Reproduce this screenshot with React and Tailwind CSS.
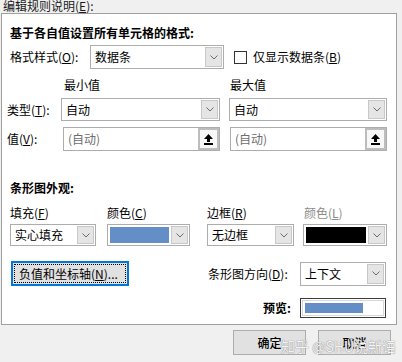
import React from 'react'

const font = { fontFamily: '"Noto Sans CJK SC", "Noto Sans", sans-serif' }

function Chevron() {
  return (
    <svg width="8" height="5" viewBox="0 0 8 5" fill="none">
      <path d="M0.5 0.5 L4 4 L7.5 0.5" stroke="#6b6b6b" strokeWidth="1" />
    </svg>
  )
}

function UpIcon() {
  return (
    <svg width="9" height="11" viewBox="0 0 9 11">
      <path d="M4.5 0 L9 5 L6 5 L6 8 L3 8 L3 5 L0 5 Z" fill="#000" />
      <rect x="0" y="9" width="9" height="2" fill="#000" />
    </svg>
  )
}

function Select({ className = '', children, swatch }) {
  return (
    <div className={`flex items-stretch border border-[#adadad] bg-white ${className}`}>
      {swatch ? (
        <div className="flex-1 p-[2px]">
          <div className={`h-full ${swatch}`} />
        </div>
      ) : (
        <div className="flex-1 flex items-center pl-[4px] text-[12px] text-black">{children}</div>
      )}
      <div className="my-[1px] mr-[1px] w-[17px] flex items-center justify-center bg-[#e5e5e5] border border-[#c8c8c8]">
        <Chevron />
      </div>
    </div>
  )
}

function ValueInput({ className = '' }) {
  return (
    <div className={`flex items-stretch border border-[#adadad] bg-white ${className}`}>
      <div className="flex-1 flex items-center pl-[4px] text-[12px] text-[#6d6d6d]">(自动)</div>
      <div className="w-[21px] flex items-center justify-center border-[2px] border-[#bdbdbd] bg-[#f7f7f7]">
        <UpIcon />
      </div>
    </div>
  )
}

export default function App() {
  return (
    <div className="w-[402px] h-[362px] bg-[#f0f0f0] overflow-hidden relative text-[12px] text-black" style={font}>
      {/* caption */}
      <div className="h-[16px] pl-[3px] -mt-[2px] mb-[-1px] leading-[16px] text-[#1a1a1a]">
        编辑规则说明(<u>E</u>):
      </div>

      {/* panel */}
      <div className="ml-[1px] w-[396px] h-[312px] border border-[#a0a0a0] bg-white flex flex-col">
        <div className="mt-[11px] ml-[8px] h-[16px] leading-[16px] font-bold">基于各自值设置所有单元格的格式:</div>

        <div className="mt-[4px] flex items-center h-[24px]">
          <div className="ml-[8px] w-[80px]">格式样式(<u>O</u>):</div>
          <Select className="w-[134px] h-[24px]">数据条</Select>
          <div className="ml-[10px] w-[13px] h-[13px] border border-[#333] bg-white" />
          <div className="ml-[6px]">仅显示数据条(<u>B</u>)</div>
        </div>

        <div className="mt-[8px] flex h-[16px] leading-[16px]">
          <div className="ml-[62px] w-[166px]">最小值</div>
          <div>最大值</div>
        </div>

        <div className="mt-[5px] flex items-center h-[23px]">
          <div className="ml-[5px] w-[54px]">类型(<u>T</u>):</div>
          <Select className="w-[159px] h-[23px]">自动</Select>
          <Select className="ml-[9px] w-[158px] h-[23px]">自动</Select>
        </div>

        <div className="mt-[6px] flex items-center h-[24px]">
          <div className="ml-[5px] w-[56px]">值(<u>V</u>):</div>
          <ValueInput className="w-[157px] h-[24px]" />
          <ValueInput className="ml-[10px] w-[157px] h-[24px]" />
        </div>

        <div className="mt-[29px] ml-[8px] h-[16px] leading-[16px] font-bold">条形图外观:</div>

        <div className="mt-[9px] flex h-[16px] leading-[16px]">
          <div className="ml-[8px] w-[97px]">填充(<u>F</u>)</div>
          <div className="w-[100px]">颜色(<u>C</u>)</div>
          <div className="w-[97px]">边框(<u>R</u>)</div>
          <div className="text-[#8a8a8a]">颜色(<u>L</u>)</div>
        </div>

        <div className="mt-[3px] flex items-center h-[22px]">
          <Select className="ml-[8px] w-[86px] h-[22px]">实心填充</Select>
          <Select className="ml-[11px] w-[83px] h-[22px]" swatch="bg-[#638ec6]" />
          <Select className="ml-[17px] w-[87px] h-[22px]">无边框</Select>
          <Select className="ml-[9px] w-[84px] h-[22px]" swatch="bg-black" />
        </div>

        <div className="mt-[15px] flex items-center h-[25px]">
          <div className="ml-[9px] w-[118px] h-[25px] border-[2px] border-[#0078d7] bg-[#e1e1e1] p-[1px]">
            <div className="h-full border border-dotted border-black flex items-center pl-[4px]">
              负值和坐标轴(<u>N</u>)...
            </div>
          </div>
          <div className="ml-[79px] w-[92px]">条形图方向(<u>D</u>):</div>
          <Select className="w-[86px] h-[24px]">上下文</Select>
        </div>

        <div className="mt-[12px] flex items-center h-[20px]">
          <div className="ml-[261px] w-[37px] font-bold">预览:</div>
          <div className="w-[86px] h-[20px] border border-[#3c3c3c] p-[1px]">
            <div className="h-full border border-[#d8d8d8] p-[2px]">
              <div className="h-full w-[58px] bg-[#638ec6]" />
            </div>
          </div>
        </div>
      </div>

      {/* buttons */}
      <div className="mt-[5px] flex">
        <div className="ml-[233px] w-[73px] h-[25px] border border-[#adadad] bg-[#e1e1e1] flex items-center justify-center font-medium">确定</div>
        <div className="ml-[12px] w-[73px] h-[25px] border border-[#adadad] bg-[#e1e1e1] flex items-center justify-center font-medium">取消</div>
      </div>

      {/* watermark */}
      <div
        className="absolute left-[281px] top-[337px] text-[14px] leading-[18px] text-white/90 whitespace-nowrap"
        style={{ textShadow: '0 0 1px #8a8a8a, 0 0 1px #8a8a8a' }}
      >
        知乎 @SHU说新语
      </div>
    </div>
  )
}
